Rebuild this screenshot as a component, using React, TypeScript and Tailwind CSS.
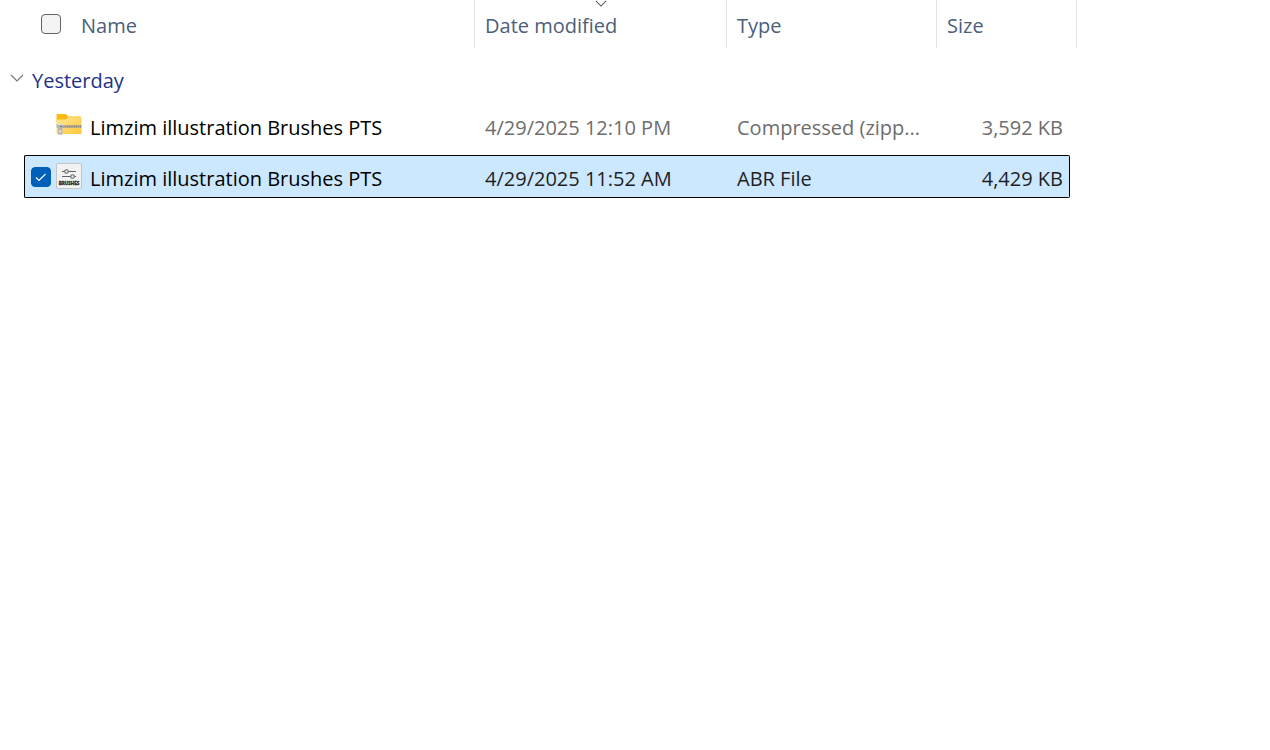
import { useState } from "react";

type FileItem = {
  id: string;
  name: string;
  modified: string;
  type: string;
  size: string;
  icon: "zip" | "brushes";
};

const files: FileItem[] = [
  {
    id: "zip",
    name: "Limzim illustration Brushes PTS",
    modified: "4/29/2025 12:10 PM",
    type: "Compressed (zipp...",
    size: "3,592 KB",
    icon: "zip",
  },
  {
    id: "abr",
    name: "Limzim illustration Brushes PTS",
    modified: "4/29/2025 11:52 AM",
    type: "ABR File",
    size: "4,429 KB",
    icon: "brushes",
  },
];

function Chevron({ className }: { className: string }) {
  return (
    <svg viewBox="0 0 14 8" fill="none" stroke="currentColor" className={className} aria-hidden="true">
      <path d="M1 1l6 6 6-6" strokeWidth="1.2" />
    </svg>
  );
}

function ZipFolderIcon() {
  return (
    <svg viewBox="0 0 26 26" className="mb-0.5 h-[26px] w-[26px] shrink-0" aria-hidden="true">
      <defs>
        <linearGradient id="folder" x1="0" y1="0" x2="1" y2="1">
          <stop offset="0" stopColor="#ffe696" />
          <stop offset="1" stopColor="#fcc83a" />
        </linearGradient>
      </defs>
      <path d="M1.5 2h7.6c.6 0 1 .2 1.4.6L12.3 4.5H24c.6 0 1 .4 1 1V10H.5V3c0-.6.4-1 1-1z" fill="#fbbb12" />
      <path
        d="M1.5 7.5h7.8c.5 0 .9-.2 1.2-.5l1.3-1.3c.3-.3.7-.5 1.2-.5H24.5c.5 0 1 .4 1 1V21c0 .6-.4 1-1 1h-23c-.6 0-1-.4-1-1V8.500c0-.6.4-1 1-1z"
        fill="url(#folder)"
      />
      <path d="M6 13h19.500v3H6z" fill="#c9b992" />
      <path d="M7 14.500h18.500" stroke="#85827a" strokeWidth="1.800" strokeDasharray="1.200 0.900" />
      <path
        d="M1 12h4.500l2.200 1.200v2.800H6.400V21.500c0 .8-.5 1.300-1.300 1.300H3.300c-.8 0-1.200-.5-1.200-1.300v-5L.5 15.300V12.600z"
        fill="#b3b4b6"
      />
      <path d="M1.200 12.500h4.200l1.700 1" stroke="#dcdddd" fill="none" />
      <path d="M3.600 18h1.200v2.800H3.600z" fill="#f5f5f3" />
      <path d="M4 14.500h2.500" stroke="#777a7d" />
    </svg>
  );
}

function BrushesIcon() {
  return (
    <svg viewBox="0 0 26 26" className="mb-0.5 h-[26px] w-[26px] shrink-0" aria-hidden="true">
      <rect x="0.500" y="0.500" width="25" height="25" rx="1.500" fill="#f2f2f2" stroke="#c3c5c7" />
      <g fill="none" stroke="#606060" strokeWidth="1.100">
        <path d="M6 8.500h2.500M12.500 8.500h7.500M6 13.500h8.500M18.500 13.500H20" />
        <circle cx="10.500" cy="8.500" r="1.800" />
        <circle cx="16.500" cy="13.500" r="1.800" />
      </g>
      <text
        x="13"
        y="21.500"
        textAnchor="middle"
        fontSize="4.600"
        fontWeight="700"
        fontFamily="Open Sans, sans-serif"
        fill="#202020"
        stroke="#202020"
        strokeWidth="0.300"
      >
        BRUSHES
      </text>
    </svg>
  );
}

function CheckBox({
  checked,
  onChange,
  label,
  className,
}: {
  checked: boolean;
  onChange: (value: boolean) => void;
  label: string;
  className: string;
}) {
  return (
    <span className={`relative flex h-5 w-5 shrink-0 ${className}`}>
      <input
        type="checkbox"
        aria-label={label}
        checked={checked}
        onChange={(event) => onChange(event.target.checked)}
        className="h-5 w-5 appearance-none rounded border border-[#626262] bg-[#f3f3f3] checked:border-[#005fb8] checked:bg-[#005fb8]"
      />
      {checked && (
        <svg viewBox="0 0 20 20" fill="none" stroke="#fff" className="pointer-events-none absolute inset-0" aria-hidden="true">
          <path d="M5 10.500l3 3 6.500-6.500" strokeWidth="1.100" />
        </svg>
      )}
    </span>
  );
}

export default function App() {
  const [selected, setSelected] = useState<string[]>(["abr"]);
  const [open, setOpen] = useState(true);

  const toggle = (id: string, value: boolean) =>
    setSelected((current) => (value ? [...current, id] : current.filter((item) => item !== id)));

  const heading = "border-r border-[#e3e3e3] p-0 text-left font-normal";

  return (
    <main className="min-h-screen overflow-x-auto bg-white font-['Open_Sans',sans-serif] text-xl text-black">
      <table className="w-[1077px] table-fixed border-separate border-spacing-0">
        <colgroup>
          <col className="w-6" />
          <col className="w-[451px]" />
          <col className="w-[252px]" />
          <col className="w-[210px]" />
          <col className="w-[133px]" />
          <col className="w-[7px]" />
        </colgroup>
        <thead className="text-[#4c607a]">
          <tr>
            <th colSpan={2} className={heading}>
              <div className="flex h-12 items-center pl-[41px]">
                <CheckBox
                  label="Select all"
                  checked={selected.length === files.length}
                  onChange={(value) => setSelected(value ? files.map((file) => file.id) : [])}
                  className="mr-5"
                />
                <button type="button" className="pt-1">Name</button>
              </div>
            </th>
            <th className={heading} aria-sort="descending">
              <div className="relative flex h-12 items-center pl-2.5">
                <Chevron className="absolute top-0 left-1/2 h-[7px] w-3 -translate-x-1/2 text-[#555]" />
                <button type="button" className="pt-1">Date modified</button>
              </div>
            </th>
            <th className={heading}>
              <button type="button" className="pt-1 pl-2.5">Type</button>
            </th>
            <th colSpan={2} className={heading}>
              <button type="button" className="pt-1 pl-2.5">Size</button>
            </th>
          </tr>
        </thead>
        <tbody>
          <tr>
            <th colSpan={6} className="p-0 text-left font-normal">
              <button
                type="button"
                aria-expanded={open}
                onClick={() => setOpen(!open)}
                className="flex h-14 items-center gap-2 pt-1 pl-2.5 text-[#1e3287]"
              >
                <Chevron className="h-2 w-3.5 text-[#777]" />
                <span className="pt-1.5">Yesterday</span>
              </button>
            </th>
          </tr>
          {open &&
            files.map((file) => {
              const active = selected.includes(file.id);
              const cell = `flex h-[43px] items-center border-y whitespace-nowrap ${
                active ? "border-black bg-[#cce8ff] text-[#1f1f1f]" : "border-transparent text-[#6d6d6d]"
              }`;
              return (
                <tr key={file.id} aria-selected={active}>
                  <td className="p-0" />
                  <td className="p-0 pb-2">
                    <div className={`${cell} rounded-l-xs border-l pl-1.5`}>
                      {active ? (
                        <CheckBox
                          label={`Select ${file.name}, ${file.type}`}
                          checked
                          onChange={(value) => toggle(file.id, value)}
                          className="mr-[5px]"
                        />
                      ) : (
                        <span className="w-[25px] shrink-0" />
                      )}
                      {file.icon === "zip" ? <ZipFolderIcon /> : <BrushesIcon />}
                      <button type="button" onClick={() => toggle(file.id, !active)} className="ml-2 pt-1 text-black">
                        {file.name}
                      </button>
                    </div>
                  </td>
                  <td className="p-0 pb-2">
                    <div className={`${cell} pt-1 pl-2.5`}>{file.modified}</div>
                  </td>
                  <td className="p-0 pb-2">
                    <div className={`${cell} pt-1 pl-2.5`}>{file.type}</div>
                  </td>
                  <td className="p-0 pb-2">
                    <div className={`${cell} justify-end rounded-r-xs border-r pt-1 pr-1.5`}>{file.size}</div>
                  </td>
                  <td className="p-0" />
                </tr>
              );
            })}
        </tbody>
      </table>
    </main>
  );
}
